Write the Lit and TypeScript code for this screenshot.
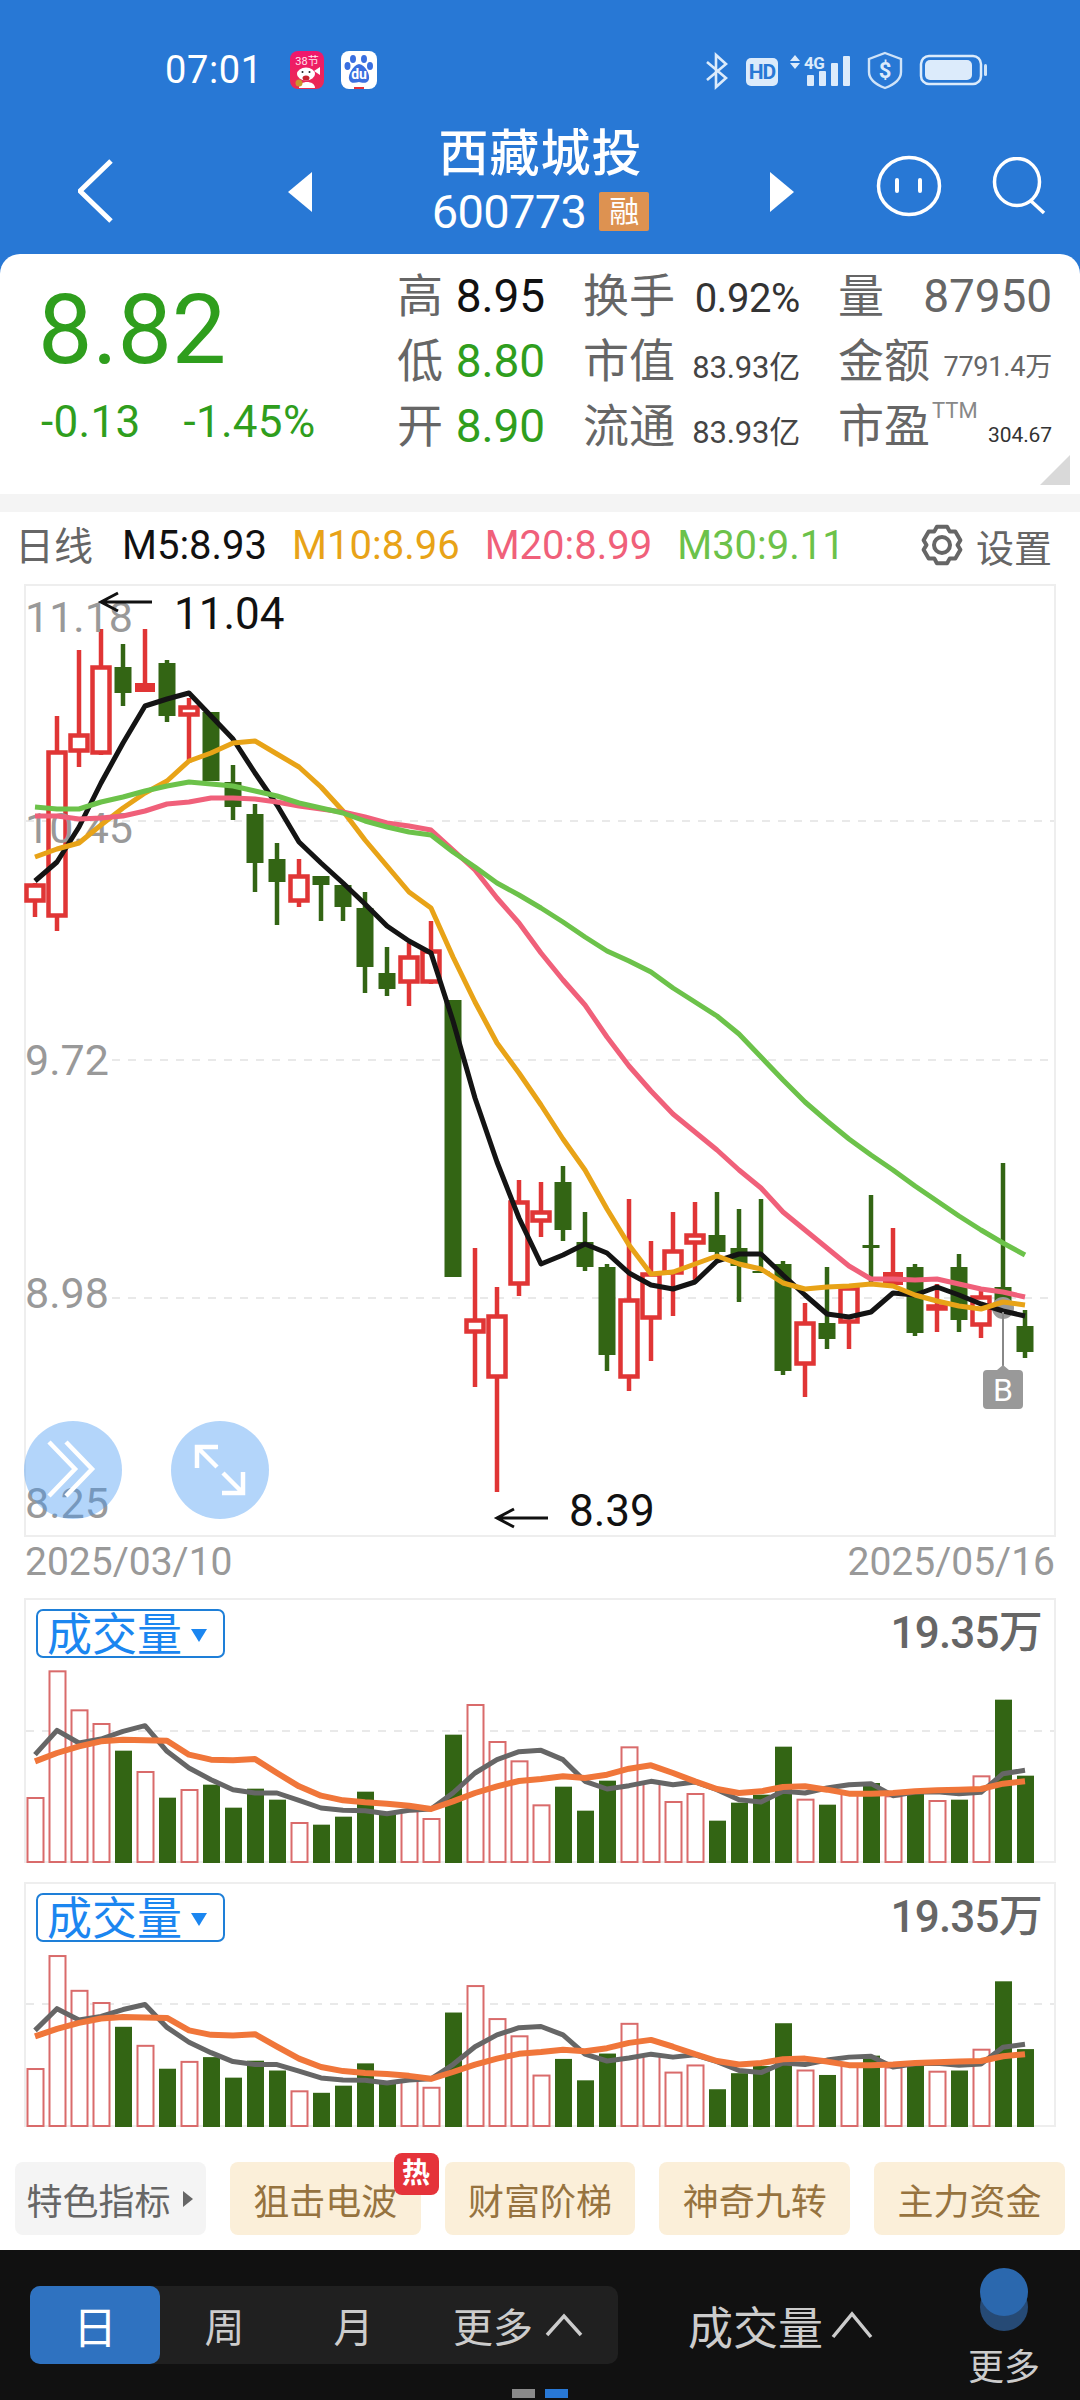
import { LitElement, html, css, svg } from "lit";
import { customElement } from "lit/decorators.js";

const X = (i: number) => 35 + 22 * i;
type C = [number, number, number, number, number];
// kind 1 red hollow, 0 green, 2 red filled: [kind, bodyTop, bodyBottom, wickTop, wickBottom]
const CANDLES: C[] = [
  [1, 883, 903, 883, 917], [1, 750, 918, 716, 931], [1, 733, 753, 650, 767], [1, 665, 755, 629, 755],
  [0, 667, 693, 644, 706], [2, 683, 692, 629, 692], [0, 663, 716, 660, 722], [1, 705, 717, 698, 763],
  [0, 712, 781, 712, 781], [0, 782, 807, 765, 820], [0, 814, 863, 804, 892], [0, 859, 882, 843, 925],
  [1, 874, 903, 859, 907], [0, 876, 885, 876, 921], [0, 885, 907, 885, 921], [0, 908, 967, 892, 993],
  [0, 973, 989, 947, 996], [1, 955, 984, 943, 1006], [1, 949, 984, 921, 984], [0, 1000, 1277, 1000, 1277],
  [1, 1318, 1334, 1248, 1387], [1, 1314, 1379, 1287, 1492], [1, 1200, 1286, 1180, 1296], [1, 1210, 1223, 1182, 1237],
  [0, 1182, 1230, 1166, 1241], [0, 1242, 1267, 1212, 1271], [0, 1267, 1355, 1264, 1371], [1, 1298, 1379, 1199, 1391],
  [1, 1272, 1320, 1241, 1361], [1, 1249, 1275, 1212, 1316], [1, 1233, 1245, 1202, 1282], [0, 1235, 1252, 1192, 1262],
  [0, 1248, 1266, 1209, 1302], [0, 1271, 1273, 1199, 1273], [0, 1264, 1371, 1261, 1375], [1, 1321, 1366, 1303, 1397],
  [0, 1323, 1339, 1267, 1349], [1, 1286, 1324, 1286, 1349], [0, 1245, 1248, 1195, 1282], [2, 1272, 1285, 1228, 1286],
  [0, 1267, 1333, 1264, 1336], [1, 1304, 1311, 1284, 1332], [0, 1267, 1320, 1254, 1332], [1, 1295, 1327, 1291, 1338],
  [0, 1287, 1312, 1163, 1312], [0, 1326, 1352, 1310, 1358],
];
const M5 = [881,862,827,783,743,706,699,693,716,739,773,805,842,863,883,904,926,941,953,1021,1098,1162,1218,1264,1255,1244,1253,1273,1285,1289,1282,1261,1254,1254,1275,1295,1314,1317,1312,1293,1295,1287,1295,1304,1311,1316];
const M10 = [857,849,843,825,808,793,781,761,753,743,741,754,767,787,811,840,866,892,908,957,1002,1043,1073,1105,1139,1170,1209,1245,1274,1272,1264,1256,1264,1269,1283,1289,1287,1286,1284,1286,1295,1301,1306,1309,1302,1305];
const M20 = [816,816,819,818,816,811,804,802,798,798,799,802,806,809,812,817,823,826,830,850,870,898,923,953,980,1005,1037,1066,1091,1114,1132,1150,1170,1188,1212,1230,1248,1266,1279,1279,1280,1279,1284,1289,1292,1297];
const M30 = [807,809,809,802,797,791,786,782,784,786,791,796,803,808,813,821,827,832,835,852,867,883,895,908,922,937,951,961,972,988,1002,1016,1034,1057,1080,1102,1121,1139,1155,1170,1186,1201,1216,1230,1243,1255];

const RED = [1,1,1,1,0,1,0,1,0,0,0,0,1,0,0,0,0,1,1,0,1,1,1,1,0,0,0,1,1,1,1,0,0,0,0,1,0,1,0,1,0,1,0,1,0,0];
const VOLTOP = [655,275,392,433,513,577,654,631,615,684,627,660,730,735,711,636,700,695,718,465,376,487,545,677,621,693,603,503,610,667,643,723,669,645,501,660,675,640,610,650,640,664,660,590,360,588];
const VGRAY = [525,452,490,478,455,438,515,565,600,630,640,640,662,685,692,693,702,692,688,640,580,540,516,512,540,605,628,618,605,615,607,630,660,667,635,640,625,615,612,648,637,636,642,638,582,572];
const VORANGE = [545,520,500,485,480,482,483,525,540,542,538,580,620,648,662,668,672,678,688,665,640,620,604,598,590,595,585,567,557,580,605,628,640,635,622,620,630,642,642,640,635,632,630,628,612,605];

const pts = (a: number[]) => a.map((y, i) => `${X(i)},${y}`).join(" ");

function arrow(x: number, y: number) {
  return svg`<path class="arrow" d="M${x + 52} ${y}H${x + 1}M${x + 18} ${y - 9}L${x + 1} ${y}L${x + 18} ${y + 9}"/>`;
}

function volChart(base: number, top: number, h: number, scale: number, gridY: number) {
  const vb = `24 ${top} 1032 ${h}`;
  const y = (zy: number) => base - ((850 - zy) / 3) * scale;
  return html`<svg class="fill" viewBox=${vb}>
    <line class="grid" x1="26" x2="1054" y1=${gridY} y2=${gridY} />
    ${VOLTOP.map((t, i) => {
      const yy = y(t);
      return RED[i]
        ? svg`<rect class="vr" x=${X(i) - 7.5} y=${yy} width="16" height=${base - yy - 1}/>`
        : svg`<rect class="vg" x=${X(i) - 8} y=${yy} width="17" height=${base - yy}/>`;
    })}
    <polyline class="vline g" points=${VGRAY.map((v, i) => `${X(i)},${y(v)}`).join(" ")} />
    <polyline class="vline o" points=${VORANGE.map((v, i) => `${X(i)},${y(v)}`).join(" ")} />
  </svg>`;
}

const gearPath = (() => {
  const cx = 22, cy = 21, d: string[] = [];
  for (let i = 0; i < 6; i++) {
    const a = (Math.PI / 3) * i - Math.PI / 2;
    const b = a + Math.PI / 6;
    const w = 0.27;
    const p = (ang: number, r: number) => `${(cx + Math.cos(ang) * r).toFixed(1)} ${(cy + Math.sin(ang) * r).toFixed(1)}`;
    d.push(`${i ? "L" : "M"}${p(a - w, 19)}L${p(a + w, 19)}L${p(b, 15.5)}`);
  }
  return d.join("") + "Z";
})();

@customElement("app-root")
export class AppRoot extends LitElement {
  static styles = css`
    :host {
      display: block;
      width: 1080px;
      height: 2400px;
      overflow: hidden;
      background: #fff;
      font-family: Roboto, "Noto Sans CJK SC", sans-serif;
    }
    * { box-sizing: border-box; }
    svg { display: block; }
    .blue { height: 254px; background: #2878d5; color: #fff; display: flex; flex-direction: column; }
    .status { display: flex; align-items: center; height: 40px; margin-top: 50px; padding-left: 165px; }
    .time { font-size: 38px; width: 125px; line-height: 40px; letter-spacing: 0.6px; }
    .appicon { margin-right: 17px; }
    .status-right { margin-left: auto; margin-right: 90px; }
    .nav { display: flex; align-items: center; height: 124px; margin-top: 28px; padding-left: 78px; }
    .back { width: 36px; height: 64px; margin-top: 22px; }
    .tri { width: 26px; height: 40px; margin-top: 24px; }
    .tri.l { margin-left: 174px; }
    .title { width: 456px; display: flex; flex-direction: column; align-items: center; margin-top: -4px; padding-right: 3px; }
    .name { font-size: 50px; line-height: 62px; font-weight: 500; letter-spacing: 1px; }
    .code { display: flex; align-items: center; gap: 13px; margin-top: 5px; }
    .code span { font-size: 47px; line-height: 44px; letter-spacing: -0.7px; }
    .code b { width: 50px; height: 39px; background: #dd9251; font-weight: 400; font-size: 30px; line-height: 39px; text-align: center; border-radius: 2px; }
    .face { margin-left: 80px; margin-top: 12px; }
    .search { margin-left: 50px; margin-top: 12px; }

    .qwrap { background: #2878d5; }
    .quote { height: 240px; background: #fff; position: relative; display: flex; border-radius: 20px 20px 0 0; }
    .left { width: 397px; padding-left: 38px; padding-top: 22px; color: #2f9e1d; }
    .price { font-size: 97px; line-height: 108px; letter-spacing: -0.3px; }
    .chg { display: flex; gap: 43px; font-size: 44px; line-height: 44px; margin-top: 16px; letter-spacing: 0.3px; padding-left: 3px; }
    .grid3 { display: grid; grid-template-columns: 148px 217px 214px; grid-auto-rows: 65px; column-gap: 38px; padding-top: 9px; }
    .cell { display: flex; justify-content: space-between; align-items: center; }
    .lb { font-size: 46px; color: #666; white-space: nowrap; margin-bottom: 8px; }
    .v { font-size: 46px; letter-spacing: -0.1px; }
    .v.s { font-size: 40px; margin-top: 6px; letter-spacing: -0.4px; }
    .v.m { font-size: 31px; margin-top: 8px; color: #444; letter-spacing: -0.2px; }
    .v.xs { font-size: 27px; color: #666; margin-top: 8px; letter-spacing: -0.2px; }
    .v.xxs { font-size: 21px; color: #333; margin-top: 18px; }
    .black { color: #111; }
    .gray { color: #666; }
    .green { color: #2f9e1d; }
    .dark { color: #333; }
    .ttm { font-size: 22px; color: #888; vertical-align: 24px; margin-left: 2px; }
    .corner { position: absolute; right: 10px; bottom: 9px; }

    .sep { height: 18px; background: #f4f4f4; }
    .legend { display: flex; align-items: center; height: 72px; padding: 0 28px 6px 15px; white-space: nowrap; }
    .legend .d { font-size: 39px; color: #666; width: 107px; margin-bottom: 4px; }
    .legend .m { font-size: 40px; margin-right: 25px; }
    .m5 { color: #111; }
    .m10 { color: #e8a317; }
    .m20 { color: #f0607a; }
    .m30 { color: #6cc24a; }
    .legend .set { margin-left: auto; display: flex; align-items: center; gap: 12px; font-size: 38px; color: #666; }

    .chart { position: relative; height: 953px; margin: 0 24px; box-shadow: inset 0 0 0 2px #eeeeee; }
    .fill { position: absolute; inset: 0; width: 100%; height: 100%; }
    .yl { font-size: 43px; fill: #999; }
    .mk { font-size: 44px; fill: #111; }
    .bt { font-size: 32px; fill: #fff; }
    .grid { stroke: #e9e9e9; stroke-width: 2; stroke-dasharray: 8 8; }
    .arrow { stroke: #111; stroke-width: 3; fill: none; }
    .ma { fill: none; stroke-width: 5; stroke-linejoin: round; }
    .round { position: absolute; top: 837px; width: 98px; height: 98px; border-radius: 50%; background: rgba(65, 150, 242, 0.4); display: flex; align-items: center; justify-content: center; }
    .round.a { left: 0; }
    .round.b { left: 147px; }
    .dates { display: flex; justify-content: space-between; height: 61px; padding: 2px 25px 0; font-size: 39px; line-height: 46px; color: #999; }

    .vol { position: relative; margin: 0 24px; box-shadow: inset 0 0 0 2px #eeeeee; }
    .vol.one { height: 265px; }
    .vol.two { height: 245px; margin-top: 19px; }
    .vr { fill: #fff; stroke: #d96b6b; stroke-width: 2; }
    .vg { fill: #336514; }
    .vline { fill: none; stroke-linejoin: round; }
    .vline.g { stroke: #666; stroke-width: 5; }
    .vline.o { stroke: #f0763a; stroke-width: 6; }
    .vhead { position: relative; display: flex; justify-content: space-between; align-items: flex-start; padding: 11px 14px 0 12px; }
    .btn { display: flex; align-items: center; gap: 6px; width: 189px; height: 49px; padding: 4px 0 0 9px; border: 2px solid #1e7fd8; border-radius: 7px; background: #fff; color: #1b86f0; font-size: 45px; line-height: 41px; }
    .vval { font-size: 44px; line-height: 48px; color: #666; font-weight: 500; letter-spacing: -0.8px; }

    .chips { display: flex; gap: 24px; padding: 0 15px; margin-top: 35px; height: 73px; }
    .chip { position: relative; flex: 1; background: #fbefd9; color: #96733f; border-radius: 8px; font-size: 36px; display: flex; align-items: center; justify-content: center; white-space: nowrap; }
    .chip.g { background: #f4f4f4; color: #666; gap: 12px; }
    .hot { position: absolute; right: -18px; top: -9px; width: 45px; height: 42px; background: #e5333a; color: #fff; font-size: 28px; font-weight: 700; line-height: 42px; text-align: center; border-radius: 8px; }

    .bar { position: relative; height: 150px; margin-top: 15px; background: #111; display: flex; align-items: flex-start; color: #ccc; }
    .seg { display: grid; grid-template-columns: 130px 129px 129px 200px; height: 78px; width: 588px; margin: 36px 0 0 30px; background: #202020; border-radius: 10px; font-size: 40px; }
    .seg > div { display: flex; align-items: center; justify-content: center; gap: 12px; }
    .seg .on { background: #2f72c0; color: #fff; border-radius: 10px; font-size: 44px; }
    .volsel { margin: 36px 0 0 70px; height: 78px; display: flex; align-items: center; gap: 8px; font-size: 45px; }
    .more { position: absolute; right: 40px; top: 18px; width: 72px; display: flex; flex-direction: column; align-items: center; }
    .more div { font-size: 36px; margin-top: 15px; line-height: 44px; white-space: nowrap; }
    .page { position: absolute; left: 512px; bottom: 2px; display: flex; gap: 10px; }
    .page i { width: 23px; height: 9px; background: #8a8a8a; display: block; }
    .page i + i { background: #2878d5; }
  `;

  render() {
    const cell = (lb: unknown, v: unknown, cls: string) => html`<div class="cell"><span class="lb">${lb}</span><span class="v ${cls}">${v}</span></div>`;
    const chev = html`<svg width="38" height="24" viewBox="0 0 38 24"><path d="M2 22L19 3L36 22" fill="none" stroke="#ccc" stroke-width="3.5"/></svg>`;
    const volHead = html`<div class="vhead">
      <div class="btn">成交量<svg width="22" height="22" viewBox="0 0 22 22"><path d="M3 4H19L11 17Z" fill="#1b86f0"/></svg></div>
      <div class="vval">19.35万</div>
    </div>`;
    return html`
      <div class="blue">
        <div class="status">
          <div class="time">07:01</div>
          <svg class="appicon" width="34" height="38" viewBox="0 0 34 38">
            <defs><linearGradient id="pk" x1="0" y1="0" x2="0" y2="1"><stop offset="0" stop-color="#f0166e"/><stop offset="1" stop-color="#ea2b52"/></linearGradient></defs>
            <rect width="34" height="38" rx="8" fill="url(#pk)"/>
            <text x="17" y="14" font-size="11" fill="#ffe4ee" text-anchor="middle" font-family="Roboto, 'Noto Sans CJK SC'">38节</text>
            <ellipse cx="16" cy="23" rx="9" ry="6.5" fill="#fff"/>
            <path d="M9 37C9 29 25 29 25 37Z" fill="#fff"/><path d="M24 20L30 16L30 24Z" fill="#fff"/>
            <ellipse cx="16" cy="27" rx="3.5" ry="2.5" fill="#c8232f"/><circle cx="9" cy="32" r="3.5" fill="#c9962e"/>
            <circle cx="12.5" cy="21" r="1" fill="#222"/><circle cx="19.5" cy="21" r="1" fill="#222"/>
          </svg>
          <svg class="appicon" width="36" height="38" viewBox="0 0 36 38">
            <rect width="36" height="38" rx="8" fill="#fff"/>
            <g fill="#3a6fe0"><ellipse cx="12" cy="8" rx="3" ry="4"/><ellipse cx="23" cy="8" rx="3" ry="4"/><ellipse cx="6.5" cy="15" rx="3" ry="4"/><ellipse cx="29" cy="15" rx="3" ry="4"/><path d="M18 13C25 14 29 24 28 28C27 33 21 32 18 31C14 32 9 33 8 28C7 24 12 14 18 13Z"/></g>
            <text x="18" y="28" font-size="14" font-weight="700" fill="#fff" text-anchor="middle" font-family="Roboto">du</text>
            <rect x="13" y="36" width="10" height="2" fill="#e5333a"/>
          </svg>
          <svg class="status-right" width="285" height="40" viewBox="705 50 285 40" font-family="Roboto">
            <path d="M707 62L726 78L716 87V55L726 64L707 80" fill="none" stroke="#dcebfb" stroke-width="2.6"/>
            <rect x="746" y="58" width="32" height="28" rx="5" fill="#dcebfb"/>
            <text x="762" y="79" font-size="21" font-weight="700" fill="#2878d5" text-anchor="middle" letter-spacing="-1">HD</text>
            <path d="M790 61L795 55L800 61ZM790 63H800L795 69Z" fill="#dcebfb"/>
            <text x="804" y="69" font-size="17" font-weight="700" fill="#dcebfb" letter-spacing="-0.5">4G</text>
            <g fill="#dcebfb"><rect x="807" y="75" width="7" height="11" rx="1"/><rect x="819" y="71" width="7" height="15" rx="1"/><rect x="831" y="63" width="7" height="23" rx="1"/><rect x="843" y="56" width="7" height="30" rx="1"/></g>
            <path d="M885 53L901 59V72C901 80 893 85 885 88C877 85 869 80 869 72V59Z" fill="none" stroke="#cfe3f8" stroke-width="2.4"/>
            <text x="885" y="78" font-size="22" font-weight="700" fill="#dcebfb" text-anchor="middle">$</text>
            <rect x="921" y="56" width="60" height="28" rx="8" fill="none" stroke="#dcebfb" stroke-width="2.5"/>
            <rect x="925" y="60" width="47" height="20" rx="5" fill="#dcebfb"/>
            <rect x="984" y="64" width="3" height="12" rx="1.5" fill="#cfe3f8"/>
          </svg>
        </div>
        <div class="nav">
          <svg class="back" viewBox="0 0 36 64"><path d="M33 2L2 32L33 62" fill="none" stroke="#fff" stroke-width="5"/></svg>
          <svg class="tri l" viewBox="0 0 26 40"><path d="M24 0V40L0 20Z" fill="#fff"/></svg>
          <div class="title">
            <div class="name">西藏城投</div>
            <div class="code"><span>600773</span><b>融</b></div>
          </div>
          <svg class="tri r" viewBox="0 0 26 40"><path d="M0 0V40L24 20Z" fill="#fff"/></svg>
          <svg class="face" width="66" height="62" viewBox="0 0 66 62"><ellipse cx="33" cy="31" rx="30.5" ry="28.5" fill="none" stroke="#fff" stroke-width="3.5"/><path d="M21 25V36M44 25V36" stroke="#fff" stroke-width="4" stroke-linecap="round"/></svg>
          <svg class="search" width="56" height="58" viewBox="0 0 56 58"><ellipse cx="25" cy="25" rx="22.5" ry="23.5" fill="none" stroke="#fff" stroke-width="3.5"/><path d="M39 44L52 56" stroke="#fff" stroke-width="3.5"/></svg>
        </div>
      </div>

      <div class="qwrap">
      <div class="quote">
        <div class="left">
          <div class="price">8.82</div>
          <div class="chg"><span>-0.13</span><span>-1.45%</span></div>
        </div>
        <div class="grid3">
          ${cell("高", "8.95", "black")}
          ${cell("换手", "0.92%", "s dark")}
          ${cell("量", "87950", "gray")}
          ${cell("低", "8.80", "green")}
          ${cell("市值", "83.93亿", "m")}
          ${cell("金额", "7791.4万", "xs")}
          ${cell("开", "8.90", "green")}
          ${cell("流通", "83.93亿", "m")}
          ${cell(html`市盈<span class="ttm">TTM</span>`, "304.67", "xxs")}
        </div>
        <svg class="corner" width="30" height="30" viewBox="0 0 30 30"><path d="M30 0V30H0Z" fill="#d9d9d9"/></svg>
      </div>
      </div>
      <div class="sep"></div>
      <div class="legend">
        <span class="d">日线</span>
        <span class="m m5">M5:8.93</span>
        <span class="m m10">M10:8.96</span>
        <span class="m m20">M20:8.99</span>
        <span class="m m30">M30:9.11</span>
        <span class="set">
          <svg width="44" height="42" viewBox="0 0 44 42"><path d=${gearPath} fill="none" stroke="#666" stroke-width="4" stroke-linejoin="round"/><circle cx="22" cy="21" r="8" fill="none" stroke="#666" stroke-width="4"/></svg>
          设置
        </span>
      </div>

      <div class="chart">
        <svg class="fill" viewBox="24 584 1032 953" font-family="Roboto">
          <line class="grid" x1="26" x2="1054" y1="821" y2="821"/>
          <line class="grid" x1="112" x2="1054" y1="1060" y2="1060"/>
          <line class="grid" x1="112" x2="1054" y1="1298" y2="1298"/>
          ${CANDLES.map((c, i) => {
            const [k, t, b, wt, wb] = c;
            const col = k ? "#e03535" : "#336514";
            const x = X(i);
            return svg`
              <line x1=${x} x2=${x} y1=${wt} y2=${wb} stroke=${col} stroke-width="4.5"/>
              ${k === 1
                ? svg`<rect x=${x - 8.5} y=${t + 2.5} width="17" height=${Math.max(b - t - 5, 2)} fill="#fff" stroke=${col} stroke-width="4.5"/>`
                : svg`<rect x=${x - (k ? 10 : 8.5)} y=${t} width=${k ? 20 : 17} height=${b - t} fill=${col}/>`}`;
          })}
          <text class="yl" x="25" y="632">11.18</text>
          <text class="yl" x="25" y="843">10.45</text>
          <text class="yl" x="25" y="1075">9.72</text>
          <text class="yl" x="25" y="1308">8.98</text>
          <text class="yl" x="25" y="1518">8.25</text>
          <circle cx="1003" cy="1308" r="11" fill="#999"/>
          <polyline class="ma" stroke="#141414" points=${pts(M5)}/>
          <polyline class="ma" stroke="#e8a317" points=${pts(M10)}/>
          <polyline class="ma" stroke="#f0607a" points=${pts(M20)}/>
          <polyline class="ma" stroke="#6cc24a" points=${pts(M30)}/>
          <line x1="1003" x2="1003" y1="1312" y2="1366" stroke="#888" stroke-width="2"/>
          <path d="M983 1374Q983 1370 987 1370H997L1003 1365L1009 1370H1019Q1023 1370 1023 1374V1405Q1023 1409 1019 1409H987Q983 1409 983 1405Z" fill="#999"/>
          <text class="bt" x="1003" y="1401" text-anchor="middle">B</text>
          ${arrow(100, 602)}
          <text class="mk" x="174" y="629">11.04</text>
          ${arrow(496, 1518)}
          <text class="mk" x="569" y="1526">8.39</text>
        </svg>
        <div class="round a"><svg width="60" height="60" viewBox="0 0 60 60"><path d="M6 2L32 29L6 56M23 2L49 29L23 56" fill="none" stroke="#fff" stroke-width="4.5"/></svg></div>
        <div class="round b"><svg width="52" height="52" viewBox="0 0 52 52"><path d="M3 24V3H24M3 3L23 23M49 28V49H28M49 49L29 29" fill="none" stroke="#fff" stroke-width="4.5"/></svg></div>
      </div>
      <div class="dates"><span>2025/03/10</span><span>2025/05/16</span></div>

      <div class="vol one">
        ${volChart(1863, 1598, 265, 1, 1731)}
        ${volHead}
      </div>
      <div class="vol two">
        ${volChart(2127, 1882, 245, 0.892, 2004)}
        ${volHead}
      </div>

      <div class="chips">
        <div class="chip g">特色指标<svg width="12" height="24" viewBox="0 0 12 24"><path d="M1 4L11 12L1 20Z" fill="#666"/></svg></div>
        <div class="chip">狙击电波<span class="hot">热</span></div>
        <div class="chip">财富阶梯</div>
        <div class="chip">神奇九转</div>
        <div class="chip">主力资金</div>
      </div>

      <div class="bar">
        <div class="seg">
          <div class="on">日</div>
          <div>周</div>
          <div>月</div>
          <div>更多${chev}</div>
        </div>
        <div class="volsel">成交量<svg width="42" height="28" viewBox="0 0 42 28"><path d="M2 26L21 3L40 26" fill="none" stroke="#ccc" stroke-width="3.5"/></svg></div>
        <div class="more">
          <svg width="48" height="63" viewBox="0 0 48 63"><circle cx="24" cy="39" r="24" fill="#264a75"/><circle cx="24" cy="24" r="24" fill="#2b68ae"/></svg>
          <div>更多</div>
        </div>
        <div class="page"><i></i><i></i></div>
      </div>
    `;
  }
}
